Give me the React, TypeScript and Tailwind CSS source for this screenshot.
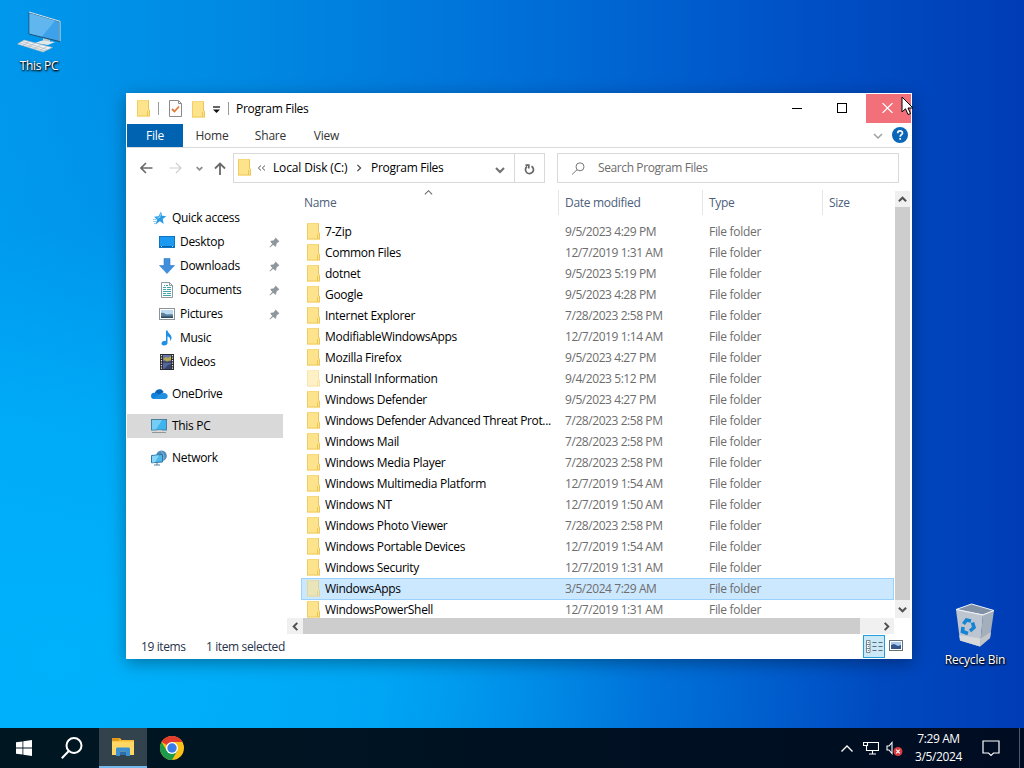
import type { ReactNode } from 'react';

type FileRow = { name: string; date: string; tint?: 'faded' | 'selected' };

const files: FileRow[] = [
    { name: '7-Zip', date: '9/5/2023 4:29 PM' },
    { name: 'Common Files', date: '12/7/2019 1:31 AM' },
    { name: 'dotnet', date: '9/5/2023 5:19 PM' },
    { name: 'Google', date: '9/5/2023 4:28 PM' },
    { name: 'Internet Explorer', date: '7/28/2023 2:58 PM' },
    { name: 'ModifiableWindowsApps', date: '12/7/2019 1:14 AM' },
    { name: 'Mozilla Firefox', date: '9/5/2023 4:27 PM' },
    { name: 'Uninstall Information', date: '9/4/2023 5:12 PM', tint: 'faded' },
    { name: 'Windows Defender', date: '9/5/2023 4:27 PM' },
    { name: 'Windows Defender Advanced Threat Prot...', date: '7/28/2023 2:58 PM' },
    { name: 'Windows Mail', date: '7/28/2023 2:58 PM' },
    { name: 'Windows Media Player', date: '7/28/2023 2:58 PM' },
    { name: 'Windows Multimedia Platform', date: '12/7/2019 1:54 AM' },
    { name: 'Windows NT', date: '12/7/2019 1:50 AM' },
    { name: 'Windows Photo Viewer', date: '7/28/2023 2:58 PM' },
    { name: 'Windows Portable Devices', date: '12/7/2019 1:54 AM' },
    { name: 'Windows Security', date: '12/7/2019 1:31 AM' },
    { name: 'WindowsApps', date: '3/5/2024 7:29 AM', tint: 'selected' },
    { name: 'WindowsPowerShell', date: '12/7/2019 1:31 AM' },
];

const FolderIcon = ({ className = '' }: { className?: string }) => (
    <svg width="14" height="17" viewBox="0 0 14 17" className={`shrink-0 ${className}`}>
        <path d="M0 0h12v9l1 1v6.500H0z" fill="#fde48c" />
        <path d="M.5 0v16" stroke="#f0cd62" />
        <path d="M0 .5h12" stroke="#f5d97a" />
        <path d="M0 16h13" stroke="#efcb5c" />
        <path d="M11.500.5v9.500M12.500 10v6M10.500 11v5" stroke="#eac654" fill="none" />
    </svg>
);

const Chevron = ({ d, size = 10, stroke = '#555', width = 1.5 }: { d: string; size?: number; stroke?: string; width?: number }) => (
    <svg width={size} height={size} viewBox="0 0 10 10" fill="none" stroke={stroke} strokeWidth={width} className="shrink-0">
        <path d={d} />
    </svg>
);

const UP = 'M1 7l4-4 4 4';
const DOWN = 'M1 3l4 4 4-4';
const LEFT = 'M7 1L3 5l4 4';
const RIGHT = 'M3 1l4 4-4 4';

const PinIcon = () => (
    <svg width="11" height="11" viewBox="0 0 11 11" className="shrink-0">
        <path d="M6.500.5l4 4-1.300.5-1.700 1.700-.3 2.300-1 .7-2-2L1 10.500.5 10l2.800-3.200-2-2 .7-1 2.400-.3L6 1.800z" fill="#8f979c" />
    </svg>
);

const StarIcon = () => (
    <svg width="16" height="16" viewBox="0 0 16 16">
        <path d="M9 1.500l1 4.200 4.300.5-3.500 2.800.8 4.900-3.700-2.700L3.500 14.500l1.700-4.700L2 6.800l4.500-.6z" fill="#2b9be6" />
        <path d="M1 9.500h3.500M1 11.500h3.500M2 13.500h2" stroke="#7cc0ea" strokeWidth=".8" />
        <path d="M9 3.500L7.500 7.500 5 8" stroke="#7cccf6" strokeWidth="1.200" fill="none" />
    </svg>
);

const DesktopIcon = () => (
    <svg width="16" height="16" viewBox="0 0 16 16">
        <rect x=".5" y="2.500" width="15" height="11" fill="#1c9af2" stroke="#0b74c4" />
        <path d="M1 12.500h14" stroke="#0a62a8" />
        <path d="M2 12.500h1M13 12.500h1" stroke="#9fd5fb" />
    </svg>
);

const DownloadIcon = () => (
    <svg width="16" height="16" viewBox="0 0 16 16">
        <path d="M5 .5h6v7h4.500L8 15.500.5 7.500H5z" fill="#3f8fdc" stroke="#2f7dc8" strokeWidth=".6" />
    </svg>
);

const DocumentIcon = () => (
    <svg width="16" height="16" viewBox="0 0 16 16">
        <path d="M2.500.5h8l3 3v12h-11z" fill="#fff" stroke="#8d999c" />
        <path d="M10.500.5v3h3" stroke="#8d999c" fill="none" />
        <path d="M5 3.500h1M7 3.500h2M4 5.500h3M8 5.500h4M4 7.500h3M8 7.500h4M4 9.500h8M4 11.500h3M8 11.500h4M4 13.500h8" stroke="#3fa3a8" />
    </svg>
);

const PictureIcon = () => (
    <svg width="16" height="16" viewBox="0 0 16 16">
        <rect x=".5" y="2.500" width="15" height="11" fill="#fff" stroke="#8b9499" />
        <rect x="2" y="4" width="12" height="8" fill="#b9daf2" />
        <path d="M2 7c3-1 4 1.500 6 1.500s4-.5 6 0V12H2z" fill="#5c7f9a" />
        <path d="M2 10.500h12V12H2z" fill="#2d4a62" />
    </svg>
);

const MusicIcon = () => (
    <svg width="16" height="16" viewBox="0 0 16 16">
        <path d="M7 .5h1.500c.3 3 4.700 4 4 8-.2 1.300-.8 2-1.400 2.500.6-2.500-.4-4-2.600-4.700v6.400C8.500 14.500 7 15.500 5 15.500c-1.500 0-2.500-.8-2.500-2 0-1.600 2-3 4.500-2.600z" fill="#1d8fe4" />
    </svg>
);

const VideoIcon = () => (
    <svg width="16" height="16" viewBox="0 0 16 16">
        <rect x="1" y="0" width="14" height="16" fill="#2a2a2c" />
        <rect x="4" y="1" width="8" height="6.500" fill="#6477a8" />
        <rect x="4" y="8.500" width="8" height="6.500" fill="#5567a0" />
        <path d="M4 5l3-2 2 1 3-2v4L8 7.500z" fill="#b9a94e" />
        <path d="M5 15l4-4 3-1v5z" fill="#34446f" />
        <path d="M2.500 1v14M13.500 1v14" stroke="#e7e7e7" strokeWidth="1.200" strokeDasharray="1.300 1.200" />
    </svg>
);

const CloudIcon = () => (
    <svg width="17" height="16" viewBox="0 0 17 16">
        <path d="M3.800 7C4.500 4.300 7 2.800 9.300 3.300c1.500.3 2.700 1.300 3.300 2.700L8 10z" fill="#0a63b5" />
        <path d="M3 13A3 3 0 0 1 3.300 6.800c1.500-.3 2.700.2 3.700.9l6 4.300-1 1z" fill="#1280d8" />
        <path d="M2.500 13c2-2.500 6.500-5.500 10-6 2.500-.3 4.200 1.300 4.200 3.200 0 1.700-1.300 2.800-3 2.800z" fill="#1f8fe2" />
    </svg>
);

const ThisPcIcon = () => (
    <svg width="17" height="16" viewBox="0 0 17 16">
        <rect x=".5" y="1.500" width="15" height="10.500" fill="#3db4ee" stroke="#4d7f9c" />
        <path d="M1 2h10L5 11.500H1z" fill="#74cdf5" />
        <path d="M1 14.500h14" stroke="#8d979c" />
        <path d="M6 12.500h5" stroke="#c2cacf" />
    </svg>
);

const NetworkIcon = () => (
    <svg width="17" height="16" viewBox="0 0 17 16">
        <circle cx="10.500" cy="5.800" r="5.300" fill="#4f8cba" />
        <path d="M9.500 1c3 2 4 4.500 3.200 8.500" stroke="#8dbddd" fill="none" />
        <path d="M.5 5.500l11-1V12l-11 .8z" fill="#4db8ec" stroke="#2f78a6" />
        <path d="M1 6L8 5.300 4 12.300l-3 .2z" fill="#8ad5f6" />
        <path d="M3 15h6M6 13v2" stroke="#56809c" />
    </svg>
);

const NavItem = ({ icon, label, nested, pinned, active }: { icon: ReactNode; label: string; nested?: boolean; pinned?: boolean; active?: boolean }) => (
    <div className={`flex h-6 w-[156px] shrink-0 items-center text-black ${nested ? 'pl-8' : 'pl-6'} ${active ? 'bg-[#d9d9d9]' : ''}`}>
        <span className="flex w-[21px] shrink-0">{icon}</span>
        <span className="flex-1 whitespace-nowrap">{label}</span>
        {pinned && <span className="pr-[3px]"><PinIcon /></span>}
    </div>
);

const TitleBar = () => (
    <div className="flex h-[30px] shrink-0 items-start">
        <div className="flex h-[29px] flex-1 items-center pl-[10px]">
            <FolderIcon />
            <span className="ml-[7px] h-[13px] w-px bg-[#9a9a9a]" />
            <svg width="14" height="17" viewBox="0 0 14 17" className="ml-[10px]">
                <path d="M.5.5h9l3 3v13H.5z" fill="#fdfdfd" stroke="#8b8b8b" />
                <path d="M9.500.5v3h3" fill="none" stroke="#8b8b8b" />
                <path d="M3 9l2.500 2.500L10 6.500" fill="none" stroke="#e07b39" strokeWidth="1.800" />
            </svg>
            <FolderIcon className="ml-[9px] mt-px" />
            <svg width="9" height="8" viewBox="0 0 9 8" className="ml-[6px] mt-[2px]">
                <path d="M1 1h7" stroke="#111" strokeWidth="1.300" />
                <path d="M1 3.500h7L4.500 7z" fill="#111" />
            </svg>
            <span className="ml-[7px] h-[13px] w-px bg-[#9a9a9a]" />
            <span className="ml-[7px] mt-px text-black">Program Files</span>
        </div>
        <div className="flex h-[29px] w-[45px] items-center justify-center pr-[2px]">
            <svg width="10" height="10" viewBox="0 0 10 10"><path d="M0 4.500h10" stroke="#000" /></svg>
        </div>
        <div className="flex h-[28px] w-[46px] items-center justify-center pr-[2px]">
            <svg width="10" height="10" viewBox="0 0 10 10"><rect x=".5" y=".5" width="9" height="9" fill="none" stroke="#000" /></svg>
        </div>
        <div className="flex h-[29px] w-[45px] items-center justify-center bg-[#f1707a] pb-px pr-[2px]">
            <svg width="11" height="10" viewBox="0 0 11 10"><path d="M.5 0l10 10M10.500 0l-10 10" stroke="#fff" strokeWidth="1.200" /></svg>
        </div>
    </div>
);

const Ribbon = () => (
    <div className="flex h-6 shrink-0 border-b border-[#dadbdc] tracking-[-0.2px] text-[#333]">
        <div className="flex h-[23px] w-14 items-center justify-center bg-[#0063b1] pt-px text-white">File</div>
        <div className="flex h-[23px] w-[58px] items-center justify-center pt-px">Home</div>
        <div className="flex h-[23px] w-[59px] items-center justify-center pt-px">Share</div>
        <div className="flex h-[23px] w-[53px] items-center justify-center pt-px">View</div>
        <div className="flex flex-1 items-center justify-end gap-[9px] pr-[3px]">
            <Chevron d={DOWN} stroke="#a0a0a0" />
            <svg width="16" height="16" viewBox="0 0 16 16" className="-mt-px">
                <circle cx="8" cy="8" r="8" fill="#0a66b7" />
                <path d="M5.700 6.200c0-3 4.800-3 4.800-.2 0 1.600-2.300 1.900-2.300 3.700M8.200 11v1.700" stroke="#fff" strokeWidth="1.700" fill="none" />
            </svg>
        </div>
    </div>
);

const AddressBar = () => (
    <div className="flex h-[41px] shrink-0 items-center pb-px pr-3">
        <div className="flex w-[106px] items-center pl-[13px]">
            <svg width="13" height="12" viewBox="0 0 13 12" fill="none" stroke="#6a6a6a" strokeWidth="1.600"><path d="M12.500 6H1M6 1L1 6l5 5" /></svg>
            <svg width="13" height="12" viewBox="0 0 13 12" fill="none" stroke="#d0d0d0" strokeWidth="1.200" className="ml-4"><path d="M.5 6H12M7 1l5 5-5 5" /></svg>
            <span className="ml-[14px]"><Chevron d={DOWN} size={7} stroke="#8a8a8a" width={2.4} /></span>
            <svg width="12" height="13" viewBox="0 0 12 13" fill="none" stroke="#6a6a6a" strokeWidth="1.800" className="ml-[11px]"><path d="M6 13V1.500M1 6.500l5-5 5 5" /></svg>
        </div>
        <div className="flex h-[30px] w-[312px] border border-[#d9d9d9]">
            <div className="flex flex-1 items-center pl-1 text-black">
                <FolderIcon className="-mt-px" />
                <svg width="9" height="8" viewBox="0 0 9 8" fill="none" stroke="#555" className="ml-[5px]"><path d="M4 1.500L1.300 4 4 6.500M8 1.500L5.300 4 8 6.500" /></svg>
                <span className="ml-[7px] w-[76px] whitespace-nowrap tracking-[-0.15px]">Local Disk (C:)</span>
                <span className="ml-[6px]"><Chevron d={RIGHT} size={8} stroke="#444" /></span>
                <span className="ml-[8px] flex-1">Program Files</span>
                <span className="mr-[9px] mt-[3px]"><Chevron d={DOWN} stroke="#707070" width={2} /></span>
            </div>
            <div className="flex w-[30px] items-center justify-center border-l border-[#d9d9d9] pt-px">
                <svg width="11" height="12" viewBox="0 0 11 12" fill="none" stroke="#666" strokeWidth="1.700"><path d="M7.500 3.200a4 4 0 1 1-4.500.3" /><path d="M1.500 2.200h3.300v3.300" /></svg>
            </div>
        </div>
        <div className="ml-3 flex h-[30px] flex-1 items-center border border-[#d9d9d9] pl-[13px] tracking-[-0.4px] text-[#6d6d6d]">
            <svg width="14" height="13" viewBox="0 0 14 13" fill="none" stroke="#777"><circle cx="9" cy="4.800" r="4" /><path d="M6 7.800L1 12.500" /></svg>
            <span className="ml-[13px]">Search Program Files</span>
        </div>
    </div>
);

const Sidebar = () => (
    <div className="flex w-[160px] shrink-0 flex-col pt-[17px]">
        <NavItem icon={<span className="pl-[1px]"><StarIcon /></span>} label="Quick access" />
        <NavItem icon={<DesktopIcon />} label="Desktop" nested pinned />
        <NavItem icon={<DownloadIcon />} label="Downloads" nested pinned />
        <NavItem icon={<DocumentIcon />} label="Documents" nested pinned />
        <NavItem icon={<PictureIcon />} label="Pictures" nested pinned />
        <NavItem icon={<MusicIcon />} label="Music" nested />
        <NavItem icon={<VideoIcon />} label="Videos" nested />
        <div className="h-2" />
        <NavItem icon={<CloudIcon />} label="OneDrive" />
        <div className="h-2" />
        <NavItem icon={<ThisPcIcon />} label="This PC" active />
        <div className="h-2" />
        <NavItem icon={<NetworkIcon />} label="Network" />
    </div>
);

const FileList = () => (
    <div className="flex h-[429px] w-[608px] flex-col overflow-hidden">
        <div className="relative flex h-[26px] shrink-0 pl-[14px] pt-px leading-[26px] text-[#4c607a]">
            <span className="absolute left-[137px] top-[-1px]"><Chevron d={UP} size={9} stroke="#666" width={1.2} /></span>
            <div className="w-[257px] pl-[3px]">Name</div>
            <div className="w-[144px] border-l border-[#e5e5e5] pl-[6px]">Date modified</div>
            <div className="w-[120px] border-l border-[#e5e5e5] pl-[6px]">Type</div>
            <div className="border-l border-[#e5e5e5] pl-[6px]">Size</div>
        </div>
        <div className="flex flex-col pl-[14px] pr-px pt-[6px]">
            {files.map((file) => (
                <div
                    key={file.name}
                    className={`flex shrink-0 items-center border pl-[5px] ${file.tint === 'selected' ? '-mb-px h-[22px] border-[#99d1ff] bg-[#cce8ff]' : 'h-[21px] border-transparent'}`}
                >
                    <FolderIcon className={`-mt-px ${file.tint === 'faded' ? 'opacity-50' : file.tint === 'selected' ? 'opacity-60' : ''}`} />
                    <span className={`ml-1 w-[240px] whitespace-nowrap text-black ${file.name.endsWith('...') ? 'tracking-[-0.37px]' : ''}`}>{file.name}</span>
                    <span className="w-[144px] whitespace-nowrap tracking-[-0.43px] text-[#6d6d6d]">{file.date}</span>
                    <span className="text-[#6d6d6d]">File folder</span>
                </div>
            ))}
        </div>
    </div>
);

const ExplorerWindow = () => (
    <div className="absolute left-[126px] top-[93px] flex h-[566px] w-[786px] flex-col bg-white p-px shadow-[0_4px_16px_rgba(0,0,0,0.35)]">
        <TitleBar />
        <Ribbon />
        <AddressBar />
        <div className="flex h-[445px] shrink-0">
            <Sidebar />
            <div className="flex flex-1 flex-col">
                <div className="flex h-[429px]">
                    <FileList />
                    <div className="mt-[2px] flex h-[427px] w-[15px] flex-col items-center bg-[#f0f0f0]">
                        <div className="flex h-[16px] items-center"><Chevron d={UP} size={9} stroke="#505050" width={2.2} /></div>
                        <div className="h-[393px] w-[15px] bg-[#cdcdcd]" />
                        <div className="flex h-[18px] items-center pt-px"><Chevron d={DOWN} size={9} stroke="#505050" width={2.2} /></div>
                    </div>
                </div>
                <div className="flex h-[16px] w-[607px] items-center bg-[#f0f0f0]">
                    <div className="flex w-4 justify-center"><Chevron d={LEFT} size={9} stroke="#505050" width={2.2} /></div>
                    <div className="h-4 w-[557px] bg-[#cdcdcd]" />
                    <div className="flex flex-1 justify-end pr-[3px]"><Chevron d={RIGHT} size={9} stroke="#505050" width={2.2} /></div>
                </div>
            </div>
        </div>
        <div className="flex h-6 shrink-0 items-center pl-[14px] pr-[8px] tracking-[-0.38px] text-[#26324a]">
            <span className="w-[65px] pt-px">19 items</span>
            <span className="flex-1 pt-px">1 item selected</span>
            <div className="flex h-[23px] w-[22px] items-center justify-center border border-[#26a0da] bg-[#cbe8f6]">
                <svg width="17" height="13" viewBox="0 0 17 13" fill="none" stroke="#5c6b75">
                    <path d="M.5.500h3.500v12H.5zM.5 4.500h3.500M.5 8.500h3.500" fill="#fff" strokeWidth=".8" />
                    <path d="M6.500 2.500h4M12.500 2.500h4M6.500 6.500h4M12.500 6.500h4M6.500 10.500h4M12.500 10.500h4" />
                    <path d="M1.800 2.500h1M1.800 6.500h1M1.800 10.500h1" />
                </svg>
            </div>
            <svg width="14" height="11" viewBox="0 0 14 11" className="-mt-px ml-[4px]">
                <rect x=".5" y=".5" width="13" height="10" fill="#fff" stroke="#68737c" />
                <path d="M2 2h10v7H2z" fill="#a8c8ec" />
                <path d="M2 5l3-1 4 2 3-1v4H2z" fill="#34558c" />
            </svg>
        </div>
    </div>
);

const DesktopIcons = () => (
    <>
        <div className="absolute left-[2px] top-[8px] flex w-[74px] flex-col items-center">
            <svg width="48" height="48" viewBox="0 0 48 48">
                <path d="M28 30l7 2v4l-7-2z" fill="#bfc8cd" />
                <path d="M20 35l7-2.500 13 1.500-7 3z" fill="#e3e8ea" />
                <path d="M14 4.500L44.500 13.500V33.500L14 26z" fill="#3ea2ea" stroke="#22506e" />
                <path d="M14.500 5.300L40 12.800 27 28.500l-12.500-3z" fill="#62b6f0" />
                <path d="M14 4L45 13.300V33" stroke="#dbe7ee" fill="none" />
                <path d="M2.500 36L9 32l28.500 7.500L28 44z" fill="#eef1f3" stroke="#a4b0b8" strokeWidth=".6" />
                <path d="M7 33.500l25 8M5 35l25 8M14 33.500l-6 4M20 35l-7 4M26 36.800l-7 4M32 38.300l-7 4.200" stroke="#aab6bd" strokeWidth=".7" />
            </svg>
            <span className="mt-[2px] text-white [text-shadow:1px_1px_2px_#000,0_1px_2px_#000]">This PC</span>
        </div>
        <div className="absolute left-[938px] top-[601px] flex w-[74px] flex-col items-center">
            <svg width="48" height="48" viewBox="0 0 48 48">
                <path d="M5 8.500L20.500 3 43 9.500 32 14z" fill="#8291a6" stroke="#eef3f7" />
                <path d="M5 8.500L32 14 29 45.500 9 39.500z" fill="#bcc5d0" />
                <path d="M32 14l11-4.500L39 37 29 45.500z" fill="#a5afbc" />
                <path d="M8.300 34L29.800 37.500 29 45.500 9 39.500z" fill="#d6d8d9" />
                <path d="M29.800 37.500L40 31l-1 6-10 8.500z" fill="#c3c6c9" />
                <path d="M5 8.500L32 14l11-4.500" stroke="#f2f5f8" fill="none" />
                <g fill="none" stroke="#1584d4" strokeWidth="3.600">
                    <path d="M12.500 23l3-4 4.500 1" />
                    <path d="M21.500 21.500l1.500 5-4 3.500" />
                    <path d="M17 32.500l-5.500-2 .5-4.500" />
                </g>
            </svg>
            <span className="mt-[3px] whitespace-nowrap tracking-[-0.2px] text-white [text-shadow:1px_1px_2px_#000,0_1px_2px_#000]">Recycle Bin</span>
        </div>
    </>
);

const Taskbar = () => (
    <div className="flex h-10 w-full items-center bg-gradient-to-r from-[#001722] to-[#000c22] text-white">
        <div className="flex w-[49px] justify-center pr-px">
            <svg width="16" height="16" viewBox="0 0 16 16" fill="#fff">
                <path d="M0 2.300l6.500-.9v6.200H0zM7.300 1.300L16 0v7.600H7.300zM0 8.400h6.500v6.200L0 13.700zM7.300 8.400H16V16l-8.700-1.200z" />
            </svg>
        </div>
        <div className="flex w-[50px] justify-center pr-[5px]">
            <svg width="22" height="22" viewBox="0 0 22 22" fill="none" stroke="#fff" strokeWidth="2"><circle cx="13" cy="8.500" r="7.500" /><path d="M7.800 14L.8 21.300" /></svg>
        </div>
        <div className="flex h-10 w-12 items-center justify-center border-b-2 border-[#76b9ed] bg-[#33434d]">
            <svg width="22" height="18" viewBox="0 0 22 18">
                <path d="M0 0h8l1.500 2H22v15H0z" fill="#f5b932" />
                <path d="M0 0h8l-1.500 3H0z" fill="#e09a1d" />
                <path d="M0 3.500h22V17H0z" fill="#ffd765" />
                <path d="M4 18V10.500L5 9.500h12l1 1V18h-4v-4.500H8V18z" fill="#3b8fd3" />
                <path d="M8 13.500h6V17H8z" fill="#2d6ea6" />
            </svg>
        </div>
        <div className="flex w-[50px] justify-center">
            <svg width="24" height="24" viewBox="0 0 24 24">
                <circle cx="12" cy="12" r="12" fill="#fbc116" />
                <path d="M12 12L1.600 6A12 12 0 0 1 22.400 6H12z" fill="#e33b2e" />
                <path d="M1.600 6A12 12 0 0 0 12 24l5.200-9L12 12 6.800 15z" fill="#1e9a4b" />
                <circle cx="12" cy="12" r="6" fill="#fff" />
                <circle cx="12" cy="12" r="4.700" fill="#3b7de8" />
            </svg>
        </div>
        <div className="flex-1" />
        <svg width="12" height="7" viewBox="0 0 12 7" fill="none" stroke="#fff" strokeWidth="1.300"><path d="M.5 6.500L6 1l5.500 5.500" /></svg>
        <svg width="16" height="14" viewBox="0 0 16 14" fill="none" stroke="#fff" strokeWidth="1.100" className="ml-[10px]">
            <path d="M5 1.500h10.500v8H3.500V5M.5 1.500h4v3h-4zM9.500 9.500v3.500M6 13h7" />
        </svg>
        <svg width="17" height="15" viewBox="0 0 17 15" fill="none" className="ml-[7px] mt-px">
            <path d="M1 5h2l3-3.500v11L3 9H1z" stroke="#fff" strokeWidth="1.100" />
            <circle cx="12" cy="10.500" r="4.500" fill="#d93a3e" />
            <path d="M10.200 8.700l3.600 3.600M13.800 8.700l-3.600 3.600" stroke="#fff" strokeWidth="1.200" />
        </svg>
        <div className="ml-[8px] flex w-[55px] flex-col items-center whitespace-nowrap leading-[18px] tracking-[-0.4px]">
            <span>7:29 AM</span>
            <span>3/5/2024</span>
        </div>
        <svg width="18" height="17" viewBox="0 0 18 17" fill="none" stroke="#fff" strokeWidth="1.200" className="ml-4">
            <path d="M1 1h16v12h-5.500L9 15.500 6.500 13H1z" />
        </svg>
        <span className="ml-[19px] mr-1 h-10 w-px bg-[#4c5866]" />
    </div>
);

export default function App() {
    return (
        <div className="relative flex h-[768px] w-[1024px] flex-col overflow-hidden bg-[#0058cc] font-['Open_Sans','Noto_Sans',sans-serif] text-[12px] leading-4 tracking-[-0.3px]">
            <div className="relative flex-1 bg-[radial-gradient(ellipse_820px_600px_at_60px_660px,#00b2fb_0%,#00b0fac8_40%,#00a0f444_72%,#00a0f400_100%),linear-gradient(90deg,#0098ec_0%,#0088e2_25%,#0070d8_50%,#0052c6_77%,#003cb6_100%)]">
                <DesktopIcons />
                <ExplorerWindow />
                <svg width="13" height="20" viewBox="0 0 13 20" className="absolute left-[901px] top-[96px]">
                    <path d="M1 1v15l3.500-3.200L7 18.500l2.500-1L7 12h5z" fill="#fff" stroke="#000" />
                </svg>
            </div>
            <Taskbar />
        </div>
    );
}
